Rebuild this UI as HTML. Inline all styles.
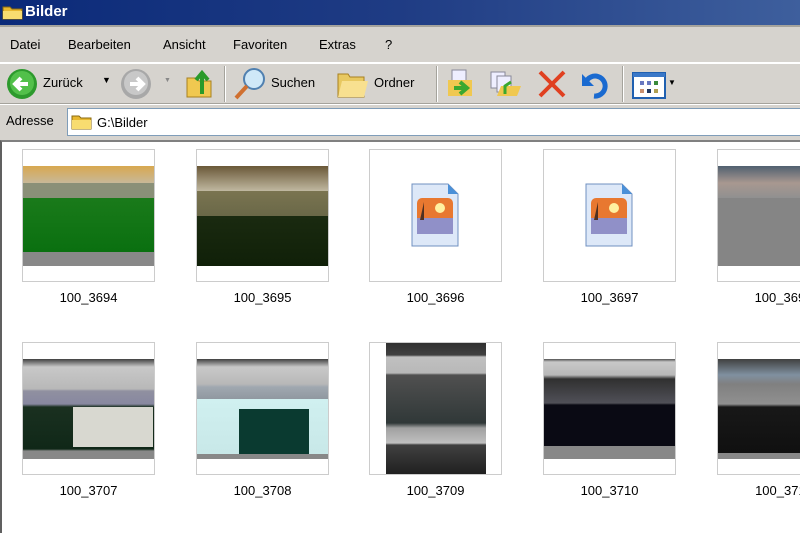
<!DOCTYPE html><html><head><meta charset="utf-8"><style>
*{margin:0;padding:0;box-sizing:border-box}
body{width:800px;height:533px;overflow:hidden;background:#fff;font-family:"Liberation Sans",sans-serif;font-size:13px;color:#000;position:relative}
.a{position:absolute}
.title{left:0;top:0;width:800px;height:25px;background:linear-gradient(90deg,#0b2a79 0%,#1f3c84 50%,#3e5f9d 100%);color:#fff;font-weight:bold;font-size:15px}
.menu{top:25px;left:0;width:800px;height:37px;background:#d6d3ce;border-top:2px solid #a5a39c}
.tb{top:62px;left:0;width:800px;height:42px;background:#d6d3ce;border-top:2px solid #fff;border-bottom:1px solid #a5a39c}
.ad{top:104px;left:0;width:800px;height:36px;background:#d6d3ce;border-top:1px solid #fff}
.box{position:absolute;width:133px;height:133px;border:1px solid #ccc;background:#fff;overflow:hidden}
.lbl{position:absolute;width:133px;text-align:center;font-size:13px}
.sep{position:absolute;width:2px;height:36px;top:65px;border-left:1px solid #a5a39c;border-right:1px solid #fff}
</style></head><body>
<div class="a title"><svg class="a" style="left:2px;top:4px" width="22" height="16"><path d="M1 3h7l2 2h10v10H1z" fill="#e8b830" stroke="#8a6a10"/><path d="M1 7h19v8H1z" fill="#f8dc70"/></svg><span class="a" style="left:25px;top:3px">Bilder</span></div>
<div class="a menu"><span class="a" style="left:10px;top:10px">Datei</span><span class="a" style="left:68px;top:10px">Bearbeiten</span><span class="a" style="left:163px;top:10px">Ansicht</span><span class="a" style="left:233px;top:10px">Favoriten</span><span class="a" style="left:319px;top:10px">Extras</span><span class="a" style="left:385px;top:10px">?</span></div>
<div class="a tb">
<svg class="a" style="left:6px;top:4px" width="32" height="32"><circle cx="16" cy="16" r="15" fill="#2d9a2d"/><circle cx="16" cy="15" r="12" fill="#52c04a"/><path d="M22 16H10M15 10l-6 6 6 6" stroke="#fff" stroke-width="4" fill="none"/></svg>
<span class="a" style="left:43px;top:11px">Zurück</span><span class="a" style="left:102px;top:11px;font-size:9px">▼</span>
<svg class="a" style="left:120px;top:4px" width="32" height="32"><circle cx="16" cy="16" r="15" fill="#a8a8a8"/><circle cx="16" cy="15" r="12" fill="#c8c8c8"/><path d="M10 16h12M17 10l6 6-6 6" stroke="#fff" stroke-width="4" fill="none"/></svg>
<span class="a" style="left:164px;top:13px;font-size:7px;color:#888">▼</span>
<svg class="a" style="left:185px;top:2px" width="30" height="34"><path d="M2 12h10l2 3h12v16H2z" fill="#f0c850" stroke="#a88020"/><path d="M17 28V10M11 14l6-7 6 7" stroke="#2a9a2a" stroke-width="4" fill="none"/></svg>
<div class="sep" style="left:224px;top:2px"></div>
<svg class="a" style="left:232px;top:2px" width="36" height="36"><circle cx="22" cy="13" r="10" fill="#cfe8f8" stroke="#5080b0" stroke-width="2"/><path d="M15 20L4 32" stroke="#d07030" stroke-width="4"/></svg>
<span class="a" style="left:271px;top:11px">Suchen</span>
<svg class="a" style="left:336px;top:4px" width="34" height="32"><path d="M2 6h10l2 3h14v20H2z" fill="#e8c860" stroke="#a88020"/><path d="M6 13h26l-4 16H2z" fill="#f8e090"/></svg>
<span class="a" style="left:374px;top:11px">Ordner</span>
<div class="sep" style="left:436px;top:2px"></div>
<svg class="a" style="left:446px;top:4px" width="34" height="32"><rect x="6" y="2" width="14" height="16" fill="#eef" stroke="#889"/><path d="M2 12h24v16H2z" fill="#f0c850"/><path d="M8 20h10M14 14l7 6-7 6" stroke="#3aa830" stroke-width="4" fill="none"/></svg>
<svg class="a" style="left:489px;top:4px" width="34" height="32"><rect x="2" y="4" width="14" height="16" fill="#eef" stroke="#889"/><rect x="8" y="8" width="14" height="16" fill="#eef" stroke="#889"/><path d="M12 18h20l-4 10H8z" fill="#f0c850"/><path d="M16 26v-8l6-4" stroke="#3aa830" stroke-width="3" fill="none"/></svg>
<svg class="a" style="left:536px;top:5px" width="32" height="30"><path d="M4 3l24 24M28 3L4 27" stroke="#e04020" stroke-width="4"/></svg>
<svg class="a" style="left:580px;top:4px" width="32" height="32"><path d="M6 14 A10 10 0 1 1 14 28" stroke="#1a6ad0" stroke-width="5" fill="none"/><path d="M2 6v12h12z" fill="#1a6ad0"/></svg>
<div class="sep" style="left:622px;top:2px"></div>
<svg class="a" style="left:632px;top:8px" width="34" height="28"><rect x="1" y="1" width="32" height="25" fill="#fff" stroke="#2060b0" stroke-width="2"/><rect x="1" y="1" width="32" height="4" fill="#3a78c8"/><g fill="#6878c0"><rect x="8" y="9" width="4" height="4"/><rect x="15" y="9" width="4" height="4"/><rect x="22" y="9" width="4" height="4" fill="#3a8a3a"/><rect x="8" y="17" width="4" height="4" fill="#c89070"/><rect x="15" y="17" width="4" height="4" fill="#203860"/><rect x="22" y="17" width="4" height="4" fill="#b0a050"/></g></svg>
<span class="a" style="left:668px;top:14px;font-size:8px">▼</span>
</div>
<div class="a ad"><span class="a" style="left:6px;top:8px">Adresse</span>
<div class="a" style="left:67px;top:3px;width:733px;height:28px;background:#fff;border:1px solid #7f9db9;border-right:none"></div>
<svg class="a" style="left:71px;top:9px" width="22" height="16"><path d="M1 2h7l2 2h10v11H1z" fill="#e8b830" stroke="#8a6a10"/><path d="M1 6h19v9H1z" fill="#f8dc70"/></svg>
<span class="a" style="left:97px;top:10px">G:\Bilder</span></div>
<div class="a" style="left:0;top:140px;width:800px;height:393px;border-top:2px solid #808080;border-left:2px solid #606060"></div>

<div class="box" style="left:22px;top:149px"><div class="a" style="left:0;top:16px;width:131px;height:100px;background:linear-gradient(#d8a850 0,#c8b898 17px,#8a9078 17px,#8a9078 32px,#1a7a1a 32px,#0a7010 86px,#888 86px)"></div></div>
<div class="box" style="left:196px;top:149px"><div class="a" style="left:0;top:16px;width:131px;height:100px;background:linear-gradient(#6a5838 0,#c0b8a0 25px,#7a7450 25px,#6a6848 50px,#1a2a10 50px,#102008 100%)"></div></div>
<div class="box" style="left:369px;top:149px"><svg class="a" style="left:40px;top:32px" width="52" height="68"><path d="M2 2h36l10 10v52H2z" fill="#dde8f8" stroke="#7090c0"/><path d="M38 2v10h10z" fill="#4a90d8"/><rect x="7" y="16" width="36" height="36" rx="5" fill="#e87830"/><rect x="7" y="36" width="36" height="16" fill="#9090c8"/><circle cx="30" cy="26" r="5" fill="#fff0a0"/><path d="M14 20v18l-4 0z" fill="#503020"/></svg></div>
<div class="box" style="left:543px;top:149px"><svg class="a" style="left:40px;top:32px" width="52" height="68"><path d="M2 2h36l10 10v52H2z" fill="#dde8f8" stroke="#7090c0"/><path d="M38 2v10h10z" fill="#4a90d8"/><rect x="7" y="16" width="36" height="36" rx="5" fill="#e87830"/><rect x="7" y="36" width="36" height="16" fill="#9090c8"/><circle cx="30" cy="26" r="5" fill="#fff0a0"/><path d="M14 20v18l-4 0z" fill="#503020"/></svg></div>
<div class="box" style="left:717px;top:149px"><div class="a" style="left:0;top:16px;width:131px;height:100px;background:linear-gradient(#506070 0,#a89890 17px,#909090 32px,#858585 32px)"></div></div>
<div class="lbl" style="left:22px;top:290px">100_3694</div><div class="lbl" style="left:196px;top:290px">100_3695</div><div class="lbl" style="left:369px;top:290px">100_3696</div><div class="lbl" style="left:543px;top:290px">100_3697</div><div class="lbl" style="left:717px;top:290px">100_3698</div>

<div class="box" style="left:22px;top:342px"><div class="a" style="left:0;top:16px;width:131px;height:100px;background:linear-gradient(#404040 0,#c8c8c8 8px,#b8b8b8 30px,#9090a0 32px,#8888a0 45px,#1a3020 48px,#102818 90px,#888 92px)"></div><div class="a" style="left:50px;top:64px;width:80px;height:40px;background:#d8d8d0"></div></div>
<div class="box" style="left:196px;top:342px"><div class="a" style="left:0;top:16px;width:131px;height:100px;background:linear-gradient(#404040 0,#c8c8c8 8px,#b8b8b8 25px,#a0a8b0 28px,#9098a0 40px,#d0f0f0 40px,#c8e8e8 95px,#888 95px)"></div><div class="a" style="left:42px;top:66px;width:70px;height:45px;background:#0a3a30"></div></div>
<div class="box" style="left:369px;top:342px"><div class="a" style="left:16px;top:0;width:100px;height:131px;background:linear-gradient(#303030 0,#404040 12px,#c0c0c0 14px,#b8b8b8 30px,#505050 32px,#303838 80px,#a0a0a0 85px,#c0c0c0 100px,#404040 102px,#202020 131px)"></div></div>
<div class="box" style="left:543px;top:342px"><div class="a" style="left:0;top:16px;width:131px;height:100px;background:linear-gradient(#505050 0,#c8c8c8 3px,#b8b8b8 16px,#303030 20px,#505058 44px,#0a0a14 46px,#0a0a14 87px,#888 87px)"></div></div>
<div class="box" style="left:717px;top:342px"><div class="a" style="left:0;top:16px;width:131px;height:100px;background:linear-gradient(#404040 0,#8090a0 16px,#808080 25px,#909090 45px,#181818 48px,#101010 94px,#888 94px)"></div></div>
<div class="lbl" style="left:22px;top:483px">100_3707</div><div class="lbl" style="left:196px;top:483px">100_3708</div><div class="lbl" style="left:369px;top:483px">100_3709</div><div class="lbl" style="left:543px;top:483px">100_3710</div><div class="lbl" style="left:717px;top:483px">100_3711</div>
</body></html>
